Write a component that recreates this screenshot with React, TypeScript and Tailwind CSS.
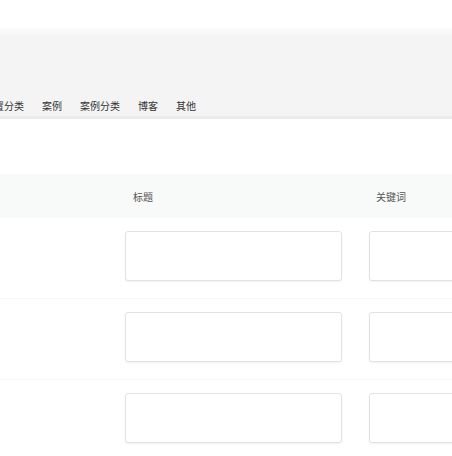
import React from "react";

const NAV = ["设置分类", "案例", "案例分类", "博客", "其他"];
const ROWS = [0, 1, 2];

function Field() {
  return (
    <div className="h-[50px] rounded-[3px] border border-[#e2e2e2] bg-white shadow-[0_1px_2px_rgba(0,0,0,0.06)]" />
  );
}

export default function App() {
  return (
    <div
      className="h-[456px] w-[452px] overflow-hidden bg-white text-[10px]"
      style={{ fontFamily: '"Noto Sans CJK SC", "Noto Sans", sans-serif' }}
    >
      <div className="h-[28px] bg-white" />
      <div className="h-[10px] bg-gradient-to-b from-[#fbfbfb] to-[#f3f3f3]" />
      <header className="flex h-[81px] items-end border-b-[3px] border-[#ebebeb] bg-[#f4f4f4]">
        <nav className="-ml-[16px] flex gap-[18px] pb-[3px] leading-[14px] text-[#333]">
          {NAV.map((n) => (
            <span key={n}>{n}</span>
          ))}
        </nav>
      </header>

      <div className="pt-[55px]">
        <div className="grid h-[44px] grid-cols-[125px_244px_1fr] items-center bg-[#f8f9f9] text-[#555]">
          <div />
          <div className="pl-[8px]">标题</div>
          <div className="pl-[7px]">关键词</div>
        </div>
        {ROWS.map((r) => (
          <div
            key={r}
            className="grid grid-cols-[125px_244px_1fr] border-b border-[#f6f6f6] pt-[13px] pb-[17px]"
          >
            <div />
            <div className="pr-[27px]">
              <Field />
            </div>
            <div className="-mr-[40px]">
              <Field />
            </div>
          </div>
        ))}
      </div>
    </div>
  );
}
